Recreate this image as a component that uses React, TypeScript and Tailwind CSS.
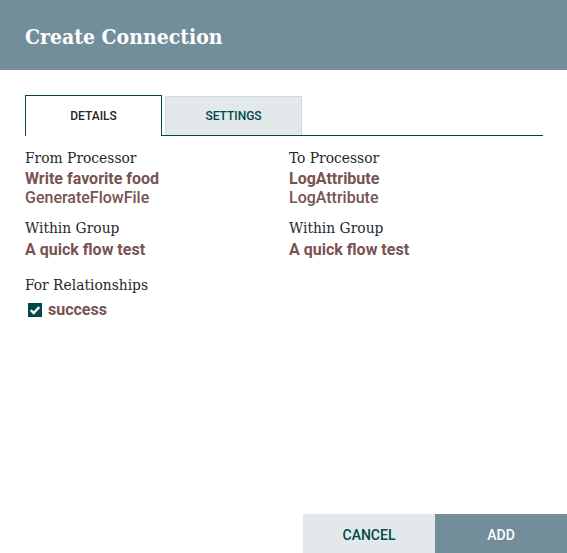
export default function App() {
  const label = "text-[15.4px] leading-[20px] text-[#262626] [font-family:'DejaVu_Serif_Condensed','DejaVu_Serif',serif]";
  const value = "text-[16px] leading-[19px] font-bold text-[#775351] [font-family:Roboto,sans-serif]";
  const sub = "text-[16px] leading-[19px] font-medium text-[#775351] [font-family:Roboto,sans-serif]";
  return (
    <div className="flex h-[553px] w-[567px] flex-col bg-white [font-family:Roboto,sans-serif]">
      <div className="flex h-[70px] items-center bg-[#728e9b] px-[25px] pt-[3px]">
        <h1 className="text-[21px] font-bold text-white [font-family:'DejaVu_Serif_Condensed','DejaVu_Serif',serif]">
          Create Connection
        </h1>
      </div>

      <div className="px-[25px] pt-[25px]">
        <div className="flex w-[518px] items-end border-b border-[#004849]">
          <div className="-mb-px flex h-[41px] w-[137px] items-center justify-center border border-b-0 border-[#004849] bg-white text-[12px] font-medium text-[#262626]">
            DETAILS
          </div>
          <div className="ml-[3px] flex h-[39px] w-[137px] items-center justify-center border border-b-0 border-[#cfd8dc] bg-[#e3e8eb] text-[12px] font-medium text-[#004849]">
            SETTINGS
          </div>
        </div>

        <div className="mt-[12px] grid grid-cols-[264px_1fr]">
          <div>
            <div className={label}>From Processor</div>
            <div className={`${value} mt-[1px]`}>Write favorite food</div>
            <div className={sub}>GenerateFlowFile</div>
            <div className={`${label} mt-[11px]`}>Within Group</div>
            <div className={`${value} mt-[2px]`}>A quick flow test</div>
          </div>
          <div>
            <div className={label}>To Processor</div>
            <div className={`${value} mt-[1px]`}>LogAttribute</div>
            <div className={sub}>LogAttribute</div>
            <div className={`${label} mt-[11px]`}>Within Group</div>
            <div className={`${value} mt-[2px]`}>A quick flow test</div>
          </div>
        </div>

        <div className={`${label} mt-[16px]`}>For Relationships</div>
        <div className="mt-[5px] flex items-center gap-[6px] pl-[3px]">
          <span className="flex h-[14px] w-[14px] items-center justify-center bg-[#004849]">
            <svg viewBox="0 0 14 14" className="h-[14px] w-[14px]">
              <path d="M2.8 7.2 L5.7 10 L11.2 4.2" fill="none" stroke="white" strokeWidth="2.4" />
            </svg>
          </span>
          <span className={value}>success</span>
        </div>
      </div>

      <div className="mt-auto flex justify-end">
        <button className="flex h-[39px] w-[132px] items-center justify-center bg-[#e3e8eb] pt-[3px] text-[14px] font-medium text-[#004849]">
          CANCEL
        </button>
        <button className="flex h-[39px] w-[132px] items-center justify-center bg-[#728e9b] pt-[3px] text-[14px] font-medium text-white">
          ADD
        </button>
      </div>
    </div>
  );
}
